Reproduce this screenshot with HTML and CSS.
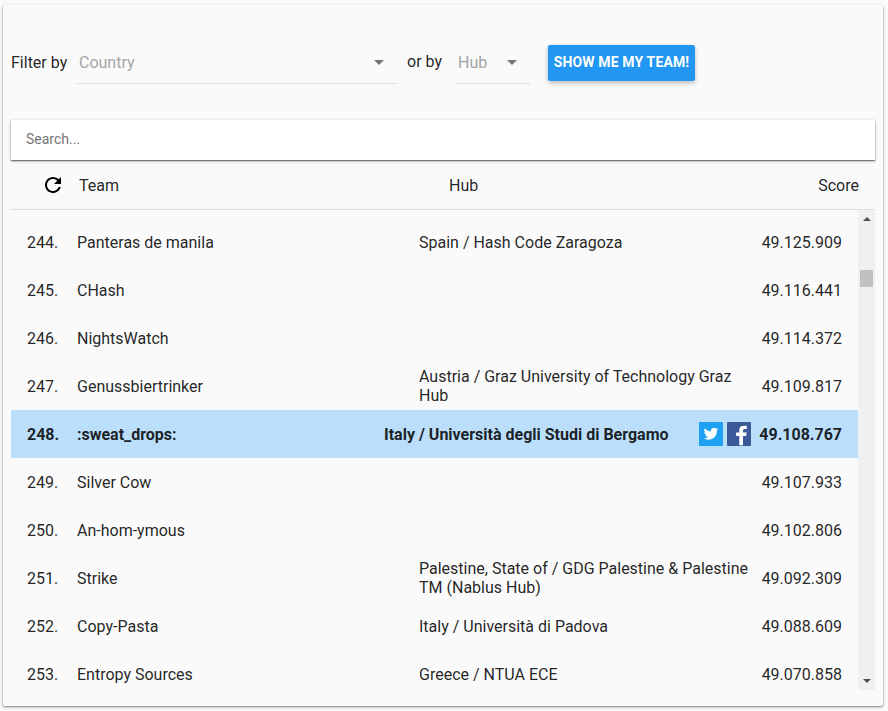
FILE: index.html
```html
<!DOCTYPE html>
<html lang="en">
<head>
<meta charset="utf-8">
<title>Scoreboard</title>
<link rel="stylesheet" href="styles.css">
</head>
<body>
<main class="card">
  <div class="filters">
    <span class="label">Filter by</span>
    <div class="select country"><span>Country</span><i class="caret"></i></div>
    <span class="label or">or by</span>
    <div class="select hub-select"><span>Hub</span><i class="caret"></i></div>
    <button class="cta">SHOW ME MY TEAM!</button>
  </div>
  <input class="search" type="text" placeholder="Search...">
  <div class="head">
    <svg class="refresh" viewBox="0 0 24 24"><path d="M17.65 6.35C16.2 4.9 14.21 4 12 4c-4.42 0-7.99 3.58-7.99 8s3.57 8 7.99 8c3.73 0 6.84-2.55 7.73-6h-2.08c-.82 2.33-3.04 4-5.65 4-3.31 0-6-2.69-6-6s2.69-6 6-6c1.66 0 3.14.69 4.22 1.78L13 11h7V4l-2.35 2.35z"/></svg>
    <span class="h-team">Team</span><span class="h-hub">Hub</span><span>Score</span>
  </div>
  <div class="list">
    <div class="rows">
      <div class="row"><span class="rank">244.</span><span class="name">Panteras de manila</span><span class="hub">Spain / Hash Code Zaragoza</span><span class="score">49.125.909</span></div>
      <div class="row"><span class="rank">245.</span><span class="name">CHash</span><span class="hub"></span><span class="score">49.116.441</span></div>
      <div class="row"><span class="rank">246.</span><span class="name">NightsWatch</span><span class="hub"></span><span class="score">49.114.372</span></div>
      <div class="row"><span class="rank">247.</span><span class="name">Genussbiertrinker</span><span class="hub">Austria / Graz University of Technology Graz Hub</span><span class="score">49.109.817</span></div>
      <div class="row mine"><span class="rank">248.</span><span class="name">:sweat_drops:</span><span class="hub">Italy / Università degli Studi di Bergamo</span>
        <span class="share">
          <svg viewBox="0 0 24 24"><path fill="#1da1f2" d="M0 0h24v24H0z"/><path fill="#fff" transform="translate(4.700 4.400) scale(.61)" d="M23.95 4.57a10 10 0 0 1-2.82.77 4.96 4.96 0 0 0 2.16-2.72c-.95.55-2 .95-3.13 1.18a4.92 4.92 0 0 0-8.38 4.48C7.69 8.1 4.07 6.13 1.64 3.16a4.92 4.92 0 0 0 1.52 6.57 4.9 4.9 0 0 1-2.23-.61v.06a4.92 4.92 0 0 0 3.95 4.83 5 5 0 0 1-2.21.08 4.94 4.94 0 0 0 4.6 3.42A9.87 9.87 0 0 1 0 19.54a13.99 13.99 0 0 0 7.55 2.21c9.05 0 14-7.5 14-13.98 0-.21 0-.42-.02-.63a9.94 9.94 0 0 0 2.42-2.57z"/></svg>
          <svg viewBox="0 0 24 24"><rect width="24" height="24" rx="1" fill="#3b5998"/><path fill="#fff" d="M12.300 23.200v-9.200H9.100v-3.500h3.200V8c0-3.100 1.900-4.300 4.700-4.300 1.300 0 2.500.1 2.800.15V7h-1.900c-1.500 0-1.900.7-1.900 1.800v1.700h3.700l-.5 3.500H16v9.200z"/></svg>
        </span><span class="score">49.108.767</span></div>
      <div class="row"><span class="rank">249.</span><span class="name">Silver Cow</span><span class="hub"></span><span class="score">49.107.933</span></div>
      <div class="row"><span class="rank">250.</span><span class="name">An-hom-ymous</span><span class="hub"></span><span class="score">49.102.806</span></div>
      <div class="row"><span class="rank">251.</span><span class="name">Strike</span><span class="hub">Palestine, State of / GDG Palestine &amp; Palestine TM (Nablus Hub)</span><span class="score">49.092.309</span></div>
      <div class="row"><span class="rank">252.</span><span class="name">Copy-Pasta</span><span class="hub">Italy / Università di Padova</span><span class="score">49.088.609</span></div>
      <div class="row"><span class="rank">253.</span><span class="name">Entropy Sources</span><span class="hub">Greece / NTUA ECE</span><span class="score">49.070.858</span></div>
    </div>
    <div class="scrollbar"><i class="up"></i><i class="thumb"></i><i class="down"></i></div>
  </div>
</main>
</body>
</html>
```
FILE: styles.css
```css
* { box-sizing: border-box; }
body {
  margin: 0;
  height: 711px;
  padding: 5px 5px 5px 3px;
  overflow: hidden;
  background: #fafafa;
  color: rgba(0, 0, 0, .87);
  font: 16px/19px Roboto, sans-serif;
}
.card {
  height: 701px;
  padding: 40px 8px 0;
  background: #fafafa;
  border-radius: 2px;
  box-shadow: 0 1px 3px rgba(0, 0, 0, .3), 0 1px 2px rgba(0, 0, 0, .26);
}
.filters { display: flex; height: 75px; }
.label { width: 66px; padding-top: 8px; white-space: nowrap; }
.or { width: 49px; margin-left: 10px; padding-top: 7px; }
.select {
  display: flex;
  justify-content: space-between;
  height: 39px;
  padding: 8px 13px 0 2px;
  border-bottom: 1px solid #dcdcdc;
  color: #a5a5a5;
}
.country { width: 320px; }
.hub-select { width: 74px; }
.caret {
  height: 0;
  margin-top: 7px;
  border: 5px solid transparent;
  border-top-color: #757575;
  border-bottom: 0;
}
.cta {
  width: 147px;
  height: 36px;
  margin-left: 18px;
  padding: 0 0 1px;
  border: 0;
  border-radius: 2px;
  background: #2196f3;
  color: #fff;
  font: 700 14px/35px Roboto, sans-serif;
  letter-spacing: .14px;
  white-space: nowrap;
  box-shadow: 0 2px 5px rgba(0, 0, 0, .26);
}
.search {
  display: block;
  width: 864px;
  height: 40px;
  padding: 0 15px 2px;
  border: 0;
  background: #fff;
  font: 14px Roboto, sans-serif;
  box-shadow: 0 1px 3px rgba(0, 0, 0, .3), 0 1px 1px rgba(0, 0, 0, .4);
}
.search::placeholder { color: #757575; }
.head {
  display: flex;
  align-items: center;
  width: 864px;
  height: 50px;
  padding: 0 16px 0 30px;
  border-bottom: 1px solid #dcdcdc;
}
.head span { padding-top: 2px; }
.refresh { width: 24px; height: 24px; margin-right: 14px; fill: #000; }
.h-team { width: 370px; }
.h-hub { flex: 1; }
.list { display: flex; width: 864px; height: 480px; }
.rows { width: 847px; padding-top: 8px; height: 480px; overflow: hidden; }
.row { display: flex; align-items: center; height: 48px; padding: 0 16px; }
.rank { width: 50px; }
.name { width: 342px; }
.hub { width: 334px; }
.score { margin-left: auto; }
.mine { background: #bbdefb; font-weight: 700; }
.mine .name { width: 307px; }
.mine .hub { width: 315px; }
.share { display: flex; gap: 4px; }
.share svg { width: 24px; height: 24px; }
.scrollbar {
  display: flex;
  flex-direction: column;
  align-items: center;
  width: 17px;
  background: #f0f0f0;
}
.up, .down { border: 4px solid transparent; }
.up { margin-top: 7px; border-top: 0; border-bottom-color: #505050; }
.down { margin: auto 0 7px; border-bottom: 0; border-top-color: #505050; }
.thumb { width: 13px; height: 17px; margin-top: 49px; background: #c1c1c1; }
```
